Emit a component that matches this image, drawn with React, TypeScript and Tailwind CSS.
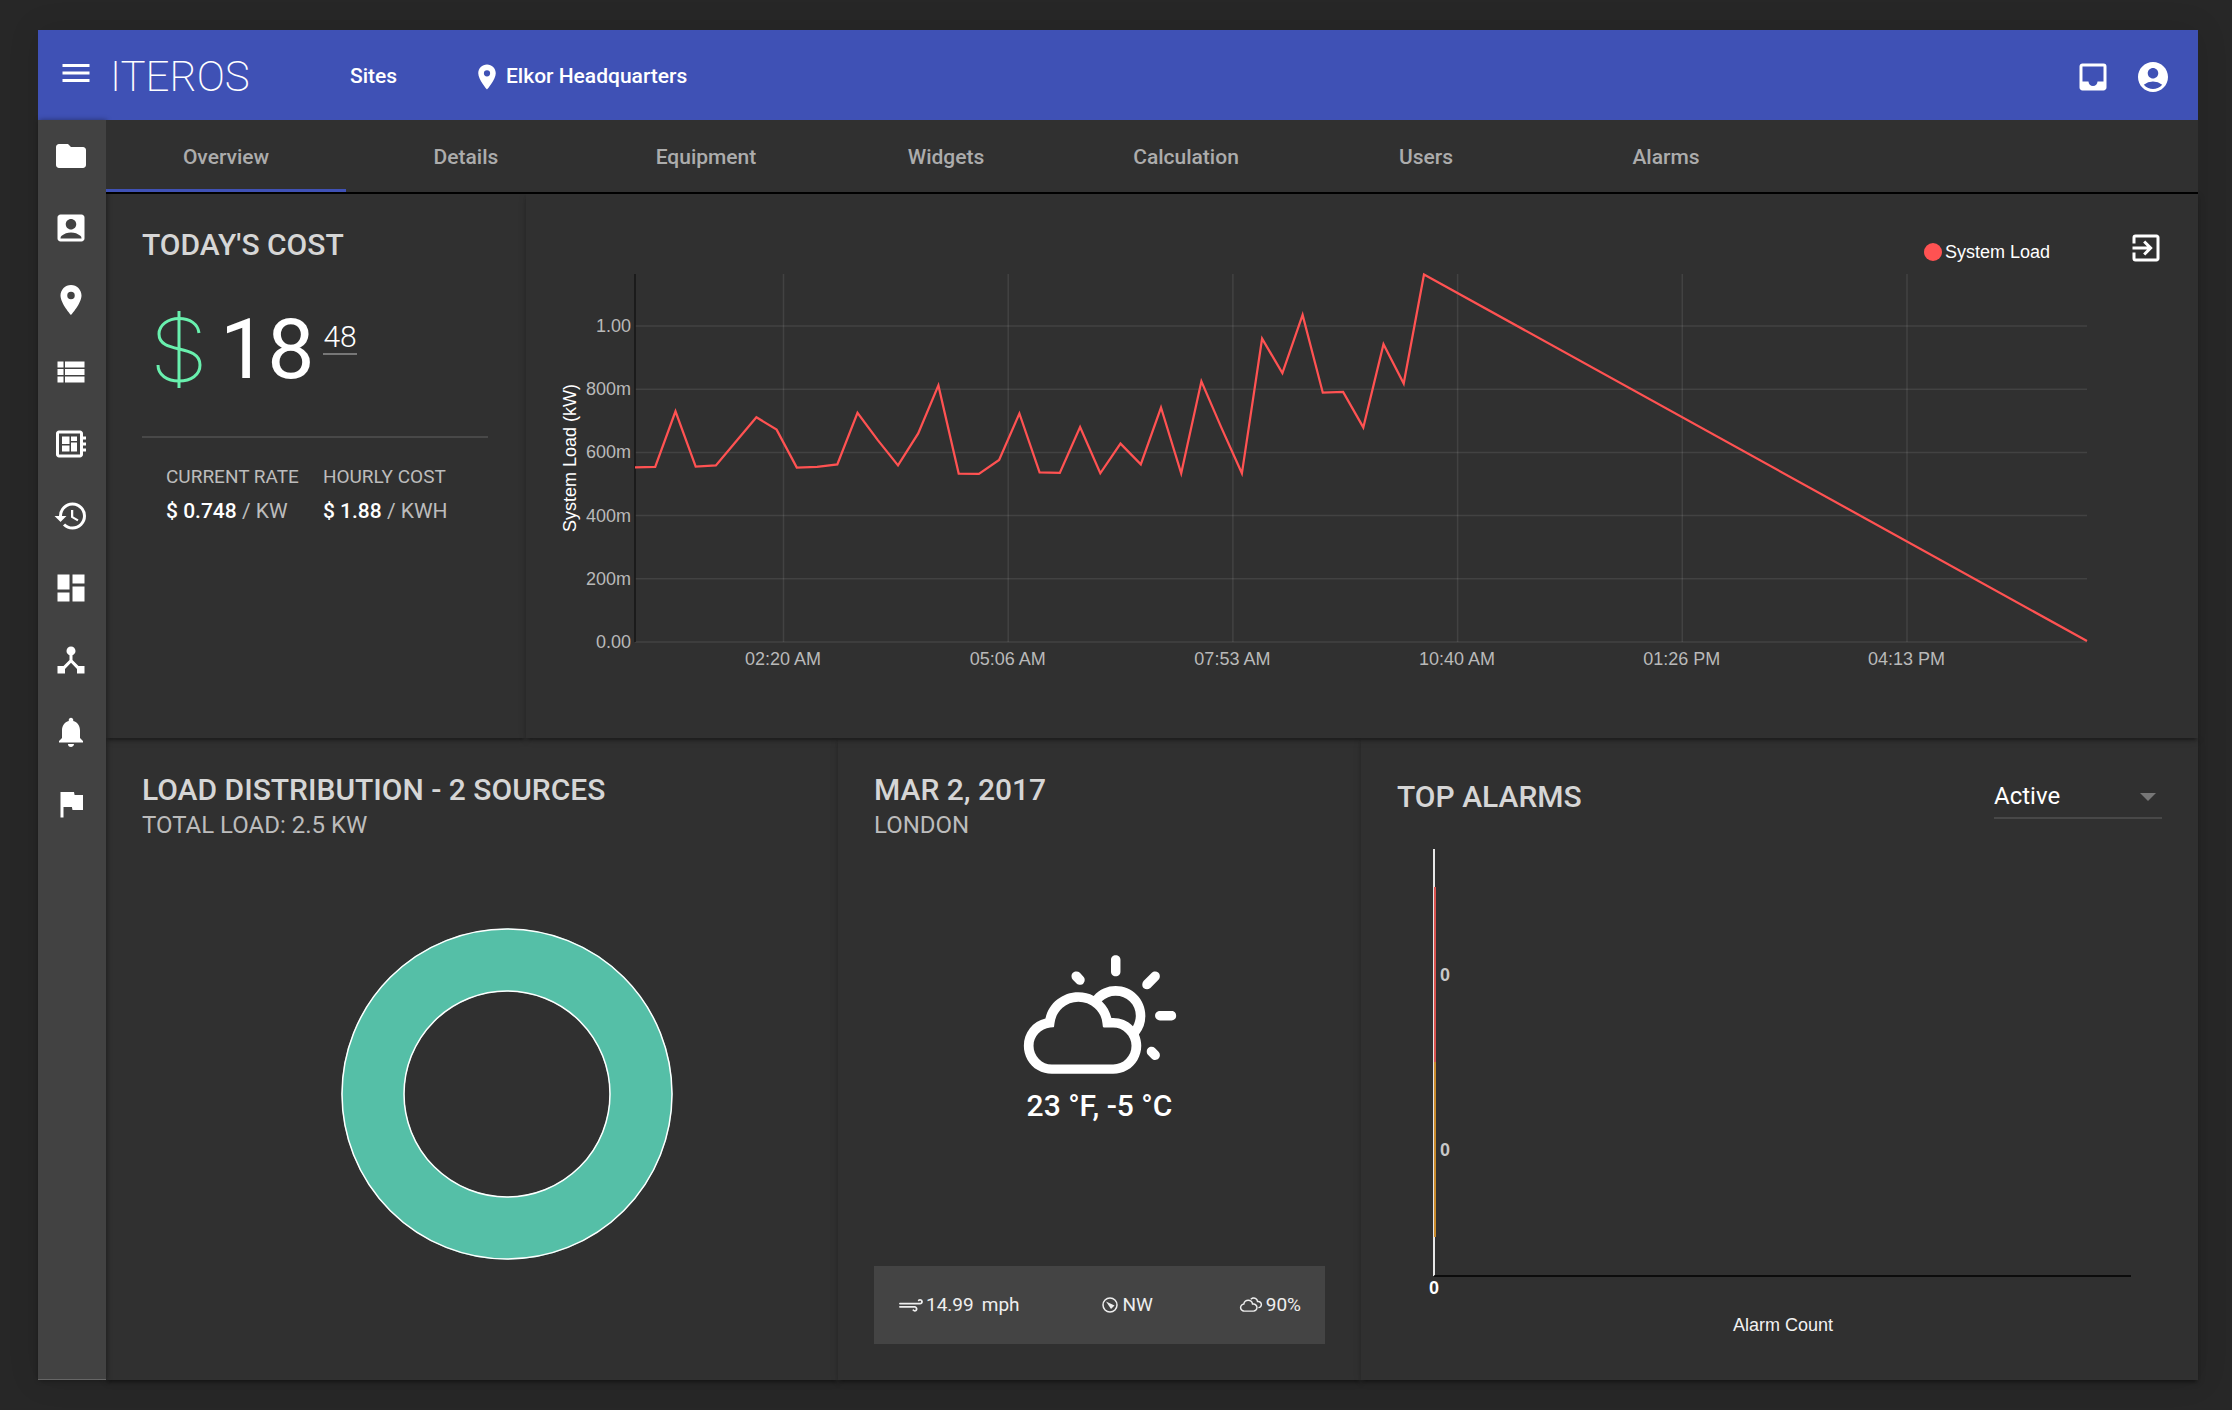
import React from 'react';
import { MdFolder, MdAccountBox, MdPlace, MdViewList, MdDeveloperBoard, MdHistory, MdDashboard, MdDeviceHub, MdNotifications, MdFlag, MdMenu, MdInbox, MdAccountCircle, MdExitToApp } from 'react-icons/md';
import { WiDayCloudy, WiStrongWind, WiCloudy } from 'react-icons/wi';

const NAV = [
  { label: 'Folders', Icon: MdFolder },
  { label: 'Accounts', Icon: MdAccountBox },
  { label: 'Sites', Icon: MdPlace },
  { label: 'Lists', Icon: MdViewList },
  { label: 'Equipment', Icon: MdDeveloperBoard },
  { label: 'History', Icon: MdHistory },
  { label: 'Dashboard', Icon: MdDashboard },
  { label: 'Network', Icon: MdDeviceHub },
  { label: 'Notifications', Icon: MdNotifications },
  { label: 'Flags', Icon: MdFlag },
];

const TABS = ['Overview', 'Details', 'Equipment', 'Widgets', 'Calculation', 'Users', 'Alarms'];

const LOAD = [
  0.553, 0.554, 0.73, 0.555, 0.559, 0.635, 0.711, 0.672, 0.552, 0.554, 0.562, 0.725, 0.639, 0.559, 0.66, 0.812,
  0.533, 0.532, 0.576, 0.723, 0.537, 0.535, 0.68, 0.534, 0.628, 0.562, 0.742, 0.534, 0.825, 0.676, 0.534, 0.96,
  0.851, 1.035, 0.789, 0.791, 0.679, 0.942, 0.818, 1.163,
];

const PANEL = 'bg-[#303030] shadow-[0_5px_2px_-3px_rgba(0,0,0,0.2),0_3px_3px_0_rgba(0,0,0,0.14),0_2px_8px_0_rgba(0,0,0,0.12)]';

function LoadChart() {
  const left = 109;
  const right = 1561;
  const bottom = 449;
  const top = 81;
  const y = (v: number) => bottom - v * 316;
  const points = LOAD.map((v, i) => `${(left + i * 20.23).toFixed(1)},${y(v).toFixed(1)}`).join(' ');
  const rows = [
    ['1.00', 1],
    ['800m', 0.8],
    ['600m', 0.6],
    ['400m', 0.4],
    ['200m', 0.2],
    ['0.00', 0],
  ] as const;
  const cols = ['02:20 AM', '05:06 AM', '07:53 AM', '10:40 AM', '01:26 PM', '04:13 PM'];
  return (
    <svg viewBox="0 1 1672 544" className="block h-auto w-full" role="img" aria-label="System load over time" fontFamily="'Liberation Sans', Arial, sans-serif" fontSize="18">
      <g stroke="#ffffff" strokeOpacity="0.09" strokeWidth="1.5">
        {rows.map(([label, v]) => (
          <line key={label} x1={left} x2={right} y1={y(v)} y2={y(v)} />
        ))}
        {cols.map((label, i) => (
          <line key={label} x1={257.5 + i * 224.7} x2={257.5 + i * 224.7} y1={top} y2={bottom} />
        ))}
      </g>
      <line x1={left} x2={left} y1={top} y2={bottom} stroke="#141414" strokeWidth="1.5" />
      <polyline points={`${points} ${right},${bottom - 1}`} fill="none" stroke="#ff5252" strokeWidth="2.25" />
      <g fill="#b9b9b9">
        {rows.map(([label, v]) => (
          <text key={label} x={left - 4} y={y(v) + 6} textAnchor="end">{label}</text>
        ))}
        {cols.map((label, i) => (
          <text key={label} x={257 + i * 224.7} y={472} textAnchor="middle">{label}</text>
        ))}
      </g>
      <text transform="translate(50 265) rotate(-90)" textAnchor="middle" fill="#ffffff">System Load (kW)</text>
    </svg>
  );
}

function AlarmChart() {
  return (
    <svg viewBox="0 0 837 530" className="block h-auto w-full" role="img" aria-label="Alarm count" fontFamily="'Liberation Sans', Arial, sans-serif" fontSize="18">
      <line x1="73" x2="73" y1="0" y2="427" stroke="#e6e6e6" strokeWidth="2" />
      <line x1="74" x2="74" y1="38" y2="213" stroke="#d9534f" strokeWidth="2" />
      <line x1="74" x2="74" y1="213" y2="388" stroke="#c98a2b" strokeWidth="2" />
      <line x1="73" x2="770" y1="427" y2="427" stroke="#000000" strokeWidth="1.5" />
      <g fontWeight="bold">
        <text x="79" y="132" fill="#c8c8c8">0</text>
        <text x="79" y="307" fill="#c8c8c8">0</text>
        <text x="73" y="445" fill="#ffffff" textAnchor="middle">0</text>
      </g>
      <text x="422" y="482" fill="#f2f2f2" textAnchor="middle">Alarm Count</text>
    </svg>
  );
}

function DollarIcon() {
  return (
    <svg viewBox="0 0 46 78" className="h-[78px] w-[46px]" fill="none" stroke="#69f0ae" strokeWidth="3" aria-hidden="true">
      <path d="M23 0V77" />
      <path d="M43 22C42 13 34 7.500 23 7.500S3 14 3 23C3 44 44 32 44 54C44 64 35 70 23 70S2 64 2 54" />
    </svg>
  );
}

function CompassIcon() {
  return (
    <svg viewBox="0 0 16 16" className="size-4" fill="none" stroke="currentColor" strokeWidth="1.5" aria-hidden="true">
      <circle cx="8" cy="8" r="7" />
      <path d="M4 4.500L12.500 8.500L9 12Z" fill="currentColor" stroke="none" />
    </svg>
  );
}

export default function App() {
  return (
    <div className="flex min-h-screen flex-col bg-[#272727] pt-[30px] pr-[34px] pb-[30px] pl-[38px] font-[Roboto,sans-serif] text-white">
      <div className="flex flex-1 flex-col bg-[#303030] shadow-[0_0_30px_rgba(0,0,0,0.1)]">
        <header className="flex h-[90px] items-center bg-[#3f51b5] pt-1 pr-[27px] pl-5">
          <button type="button" aria-label="Menu" className="-mt-2"><MdMenu className="size-9" /></button>
          <a href="#" className="ml-4 w-[220px] text-[42px] leading-none font-extralight">ITEROS</a>
          <a href="#" className="ml-5 w-[122px] text-[21px] font-medium">Sites</a>
          <a href="#" className="flex items-center gap-1 text-[21px] font-medium">
            <MdPlace className="size-[30px]" />
            Elkor Headquarters
          </a>
          <div className="ml-auto flex gap-6">
            <button type="button" aria-label="Inbox"><MdInbox className="size-9" /></button>
            <button type="button" aria-label="Account"><MdAccountCircle className="size-9" /></button>
          </div>
        </header>
        <div className="flex flex-1">
          <nav className="z-10 flex w-[68px] flex-col items-center border-b border-[#666] bg-[#424242] pr-0.5 shadow-[1px_0_5px_rgba(0,0,0,0.4)]">
            {NAV.map(({ label, Icon }) => (
              <a key={label} href="#" aria-label={label} className="flex h-[72px] items-center"><Icon className="size-9" /></a>
            ))}
          </nav>
          <main className="flex min-w-0 flex-1 flex-col">
            <div role="tablist" className="relative z-20 flex h-[74px] border-b-2 border-black bg-[#303030]">
              {TABS.map((tab, i) => (
                <button key={tab} type="button" role="tab" aria-selected={i === 0} className={i === 0 ? 'w-60 border-b-3 border-[#3f51b5] pt-1.5 text-[21px] font-medium text-[#acacac]' : 'w-60 border-b-3 border-transparent pt-1.5 text-[21px] font-medium text-[#acacac]'}>{tab}</button>
              ))}
            </div>
            <div className="relative grid grid-cols-[420fr_1672fr]">
              <section className={`pt-[33px] pr-[38px] pl-9 ${PANEL}`}>
                <h2 className="text-[30px] leading-9 font-medium text-[#d6d6d6]">TODAY'S COST</h2>
                <div className="mt-12 flex h-[78px] items-start pl-[14px]">
                  <DollarIcon />
                  <span className="ml-[18px] text-[84px] leading-[78px]">18</span>
                  <span className="mt-2.5 ml-[9px] border-b-2 border-[#777] text-[30px] leading-8 font-light">48</span>
                </div>
                <div className="mt-[47px] flex gap-6 border-t-2 border-[#484848] pt-[21px] pl-6 text-[21px] leading-[35px] whitespace-nowrap text-[#bcbcbc]">
                  <div>
                    <div className="text-[19px] leading-[35px]">CURRENT RATE</div>
                    <div><b className="font-medium text-white">$ 0.748</b> / KW</div>
                  </div>
                  <div>
                    <div className="text-[19px] leading-[35px]">HOURLY COST</div>
                    <div><b className="font-medium text-white">$ 1.88</b> / KWH</div>
                  </div>
                </div>
              </section>
              <section className={`relative ${PANEL}`}>
                <LoadChart />
                <div className="absolute top-9 right-[34px] flex items-center gap-[78px] font-['Liberation_Sans',sans-serif] text-[18px]">
                  <span className="mt-2 flex items-center gap-[3px]"><i className="size-[18px] rounded-full bg-[#ff5252]" />System Load</span>
                  <button type="button" aria-label="Open chart"><MdExitToApp className="size-9" /></button>
                </div>
              </section>
            </div>
            <div className="grid flex-1 grid-cols-[732fr_523fr_837fr]">
              <section className={`flex flex-col px-9 pt-[34px] ${PANEL}`}>
                <h2 className="text-[30px] leading-9 font-medium text-[#d6d6d6]">LOAD DISTRIBUTION - 2 SOURCES</h2>
                <p className="text-[24px] leading-[34px] text-[#bcbcbc]">TOTAL LOAD: 2.5 KW</p>
                <div className="mt-[85px] flex justify-center pl-[70px]">
                  <svg viewBox="0 0 334 334" className="w-[334px]" role="img" aria-label="Load distribution">
                    <circle cx="167" cy="167" r="134" fill="none" stroke="#55bfa7" strokeWidth="63" />
                    <circle cx="167" cy="167" r="165" fill="none" stroke="#ffffff" strokeWidth="1.5" />
                    <circle cx="167" cy="167" r="103" fill="none" stroke="#ffffff" strokeWidth="1.5" />
                  </svg>
                </div>
              </section>
              <section className={`flex flex-col px-9 pt-[34px] pb-9 ${PANEL}`}>
                <h2 className="text-[30px] leading-9 font-medium text-[#d6d6d6]">MAR 2, 2017</h2>
                <p className="text-[24px] leading-[34px] text-[#bcbcbc]">LONDON</p>
                <div className="mt-[108px] flex flex-col items-center">
                  <WiDayCloudy className="size-[170px]" />
                  <p className="-mt-8 text-[30px] leading-9 font-medium">23 °F, -5 °C</p>
                </div>
                <div className="mt-auto flex h-[78px] items-center justify-between bg-[#444] pr-6 pl-[22px] text-[19px] text-[#eee]">
                  <span className="flex items-center gap-2"><span className="flex items-center"><WiStrongWind className="size-[30px]" />14.99</span>mph</span>
                  <span className="flex items-center gap-1"><CompassIcon />NW</span>
                  <span className="flex items-center"><WiCloudy className="size-[30px]" />90%</span>
                </div>
              </section>
              <section className={`pt-[34px] ${PANEL}`}>
                <div className="flex h-[77px] items-start justify-between px-9">
                  <h2 className="mt-[7px] text-[30px] leading-9 font-medium text-[#d6d6d6]">TOP ALARMS</h2>
                  <div className="relative w-[168px] border-b-2 border-[#484848]">
                    <select aria-label="Alarm state" className="h-[45px] w-full appearance-none bg-transparent pt-0.5 text-[24px]"><option>Active</option></select>
                    <i className="pointer-events-none absolute top-[21px] right-[6px] border-x-8 border-t-8 border-x-transparent border-t-[#777]" />
                  </div>
                </div>
                <AlarmChart />
              </section>
            </div>
          </main>
        </div>
      </div>
    </div>
  );
}
